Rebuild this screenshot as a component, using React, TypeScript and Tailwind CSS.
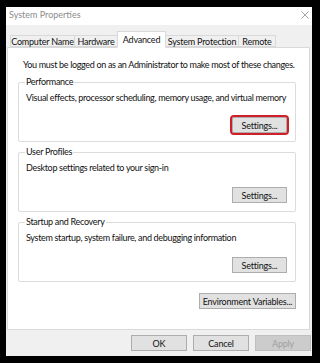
import React from 'react';

const font = { fontFamily: 'Lato, "Noto Sans", sans-serif' };

function WinButton({
  label,
  width,
  disabled,
  focused,
}: {
  label: string;
  width: string;
  disabled?: boolean;
  focused?: boolean;
}) {
  return (
    <div
      className={`${width} h-[16px] flex items-center justify-center border text-[9px] tracking-[-0.2px] leading-none whitespace-nowrap ${
        disabled
          ? 'bg-[#cccccc] border-[#bfbfbf] text-[#a0a0a0]'
          : 'bg-[#e1e1e1] border-[#adadad] text-[#111]'
      } ${focused ? 'outline-2 outline-solid outline-[#cf1f28] rounded-[2px]' : ''}`}
    >
      {label}
    </div>
  );
}

function GroupBox({
  title,
  desc,
  focused,
}: {
  title: string;
  desc: string;
  focused?: boolean;
}) {
  return (
    <div className="relative h-[60px] border border-[#dcdcdc] rounded-[2px] flex flex-col">
      <span className="absolute left-[6px] -top-[7px] bg-white px-[1px] text-[9px] tracking-[-0.3px] leading-[12px] text-[#111] whitespace-nowrap">
        {title}
      </span>
      <p className="pl-[7px] pt-[9px] text-[9px] tracking-[-0.32px] leading-[12px] text-[#111] whitespace-nowrap">
        {desc}
      </p>
      <div className="mt-auto mb-[8px] pr-[8px] flex justify-end">
        <WinButton label="Settings..." width="w-[55px]" focused={focused} />
      </div>
    </div>
  );
}

export default function App() {
  const tabs = ['Computer Name', 'Hardware', 'Advanced', 'System Protection', 'Remote'];
  const widths = ['w-[65px]', 'w-[44px]', 'w-[49px]', 'w-[74px]', 'w-[38px]'];

  return (
    <div className="w-[320px] h-[363px] bg-black pt-[7px] pl-[6px] pr-[8px] pb-[7px]" style={font}>
      <div className="h-full bg-[#f0f0f0] flex flex-col">
        {/* Title bar */}
        <div className="h-[18px] bg-white flex items-center justify-between pl-[3px] pr-[3px] pb-[3px]">
          <span className="text-[9px] text-[#8c8c8c] leading-none whitespace-nowrap">System Properties</span>
          <svg width="8" height="8" viewBox="0 0 8 8">
            <path d="M0.5 0.5 L7.5 7.5 M7.5 0.5 L0.5 7.5" stroke="#9a9a9a" strokeWidth="0.9" />
          </svg>
        </div>

        {/* Tabs */}
        <div className="h-[22px] flex items-end pl-[4px] relative z-10">
          {tabs.map((t, i) => {
            const active = t === 'Advanced';
            return (
              <div
                key={t}
                className={`${widths[i]} flex items-center justify-center text-[9px] tracking-[-0.2px] leading-none text-[#111] border border-[#d9d9d9] whitespace-nowrap ${
                  active
                    ? 'h-[17px] bg-white border-b-white -mb-px -ml-px'
                    : 'h-[12px] bg-[#f0f0f0] -ml-px first:ml-0'
                }`}
              >
                {t}
              </div>
            );
          })}
        </div>

        {/* Tab page */}
        <div className="flex-1 bg-white border border-[#d9d9d9] ml-px mr-[2px] pl-[10px] pr-[13px] flex flex-col">
          <p className="pt-[11px] pl-[5px] text-[9px] tracking-[-0.32px] leading-[12px] text-[#111] whitespace-nowrap">
            You must be logged on as an Administrator to make most of these changes.
          </p>
          <div className="mt-[11px] flex flex-col gap-[10px]">
            <GroupBox
              title="Performance"
              desc="Visual effects, processor scheduling, memory usage, and virtual memory"
              focused
            />
            <GroupBox title="User Profiles" desc="Desktop settings related to your sign-in" />
            <GroupBox
              title="Startup and Recovery"
              desc="System startup, system failure, and debugging information"
            />
          </div>
          <div className="mt-[11px] flex justify-end">
            <WinButton label="Environment Variables..." width="w-[97px]" />
          </div>
        </div>

        {/* Bottom buttons */}
        <div className="h-[26px] flex items-center justify-end gap-[6px] pr-px">
          <WinButton label="OK" width="w-[56px]" />
          <WinButton label="Cancel" width="w-[56px]" />
          <WinButton label="Apply" width="w-[56px]" disabled />
        </div>
      </div>
    </div>
  );
}
